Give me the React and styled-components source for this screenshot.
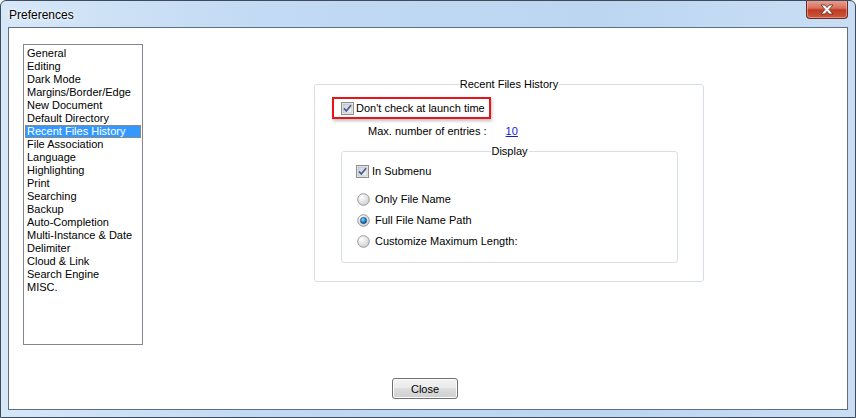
import React, { useState } from 'react';
import styled, { createGlobalStyle } from 'styled-components';

const GlobalStyle = createGlobalStyle`
  html, body {
    margin: 0;
    padding: 0;
    background: #ffffff;
  }
  body {
    font-family: "Liberation Sans", Arial, sans-serif;
    font-size: 11px;
    color: #000;
  }
`;

const Window = styled.div`
  width: 856px;
  height: 418px;
  box-sizing: border-box;
  display: flex;
  flex-direction: column;
  border: 1px solid #3e4b5c;
  border-radius: 6px 6px 0 0;
  background: linear-gradient(to right, #d6e7f8 0%, #c2daf3 30%, #bcd6f1 70%, #c9def4 100%);
  overflow: hidden;
`;

const TitleBar = styled.div`
  height: 26px;
  display: flex;
  align-items: flex-start;
  padding-left: 8px;
  flex-shrink: 0;
`;

const TitleText = styled.div`
  font-family: "Liberation Sans", Arial, sans-serif;
  font-size: 12px;
  line-height: 14px;
  margin-top: 7px;
  color: #000;
  text-shadow: 0 0 6px #ffffff, 0 0 3px #ffffff;
`;

const CloseX = styled.button`
  margin-left: auto;
  margin-right: 7px;
  margin-top: -1px;
  width: 42px;
  height: 19px;
  padding: 0;
  border: 1px solid #6a2a24;
  border-top: none;
  border-radius: 0 0 4px 4px;
  background: linear-gradient(to bottom, #e8a597 0%, #d9705d 45%, #c03a22 55%, #c85a3f 100%);
  box-shadow: inset 0 0 0 1px rgba(255, 200, 190, 0.5);
  display: flex;
  align-items: center;
  justify-content: center;
`;

const Client = styled.div`
  margin: 0 7px;
  height: 383px;
  box-sizing: border-box;
  border: 1px solid #5f6e80;
  background: #ffffff;
  display: flex;
  flex-direction: column;
`;

const Body = styled.div`
  display: flex;
  align-items: flex-start;
  padding: 16px 0 0 14px;
`;

const ListBox = styled.ul`
  list-style: none;
  margin: 0;
  padding: 2px 1px 1px;
  width: 120px;
  height: 301px;
  box-sizing: border-box;
  border: 1px solid #828790;
  flex-shrink: 0;
`;

const ListItem = styled.li`
  height: 13px;
  line-height: 13px;
  padding-left: 2px;
  white-space: nowrap;
  box-sizing: border-box;
  background: ${(p) => (p.$selected ? '#3399ff' : 'transparent')};
  color: ${(p) => (p.$selected ? '#ffffff' : '#000000')};
  outline: ${(p) => (p.$selected ? '1px dotted #e07a10' : 'none')};
  outline-offset: -1px;
  cursor: default;
`;

const GroupBox = styled.div`
  position: relative;
  box-sizing: border-box;
  width: ${(p) => p.$w}px;
  height: ${(p) => p.$h}px;
  border: 1px solid #d5dfe5;
  border-radius: 3px;
  flex-shrink: 0;
`;

const GroupTitle = styled.span`
  position: absolute;
  top: -7px;
  left: 50%;
  transform: translateX(-50%);
  padding: 0 1px;
  background: #ffffff;
  line-height: 13px;
  white-space: nowrap;
`;

const MainGroup = styled(GroupBox)`
  margin-left: 171px;
  margin-top: 40px;
  padding: 12px 0 0 17px;
`;

const Highlight = styled.div`
  display: inline-flex;
  height: 22px;
  box-sizing: border-box;
  border: 2px solid #e8141b;
  box-shadow: 1px 2px 3px rgba(0, 0, 0, 0.25);
  align-items: center;
  padding: 0 4px 0 7px;
  gap: 2px;
`;

const EntriesRow = styled.div`
  display: flex;
  align-items: center;
  margin: 4px 0 0 36px;
  height: 15px;
`;

const EntriesLink = styled.a`
  margin-left: 19px;
  color: #1a1acc;
  text-decoration: underline;
`;

const DisplayGroup = styled(GroupBox)`
  margin: 13px 0 0 9px;
  padding: 13px 0 0 14px;
  display: flex;
  flex-direction: column;
`;

const OptionRow = styled.label`
  display: flex;
  align-items: center;
  height: 13px;
  line-height: 13px;
  gap: ${(p) => (p.$radio ? 5 : 3)}px;
  margin-top: ${(p) => p.$top || 0}px;
  margin-left: ${(p) => (p.$radio ? 1 : 0)}px;
  white-space: nowrap;
  cursor: default;
`;

const Footer = styled.div`
  padding: 33px 0 0 383px;
`;

const PushButton = styled.button`
  width: 66px;
  height: 21px;
  padding: 0;
  box-sizing: border-box;
  border: 1px solid #707070;
  border-radius: 3px;
  background: linear-gradient(to bottom, #f2f2f2 0%, #ebebeb 49%, #dddddd 50%, #cfcfcf 100%);
  box-shadow: inset 0 0 0 1px #fcfcfc;
  font-family: "Liberation Sans", Arial, sans-serif;
  font-size: 11px;
  color: #000;
`;

const CheckBox = ({ checked }) => (
  <svg width="13" height="13" viewBox="0 0 13 13" style={{ flexShrink: 0 }}>
    <defs>
      <linearGradient id="cbg" x1="0" y1="0" x2="1" y2="1">
        <stop offset="0" stopColor="#cbcfd5" />
        <stop offset="1" stopColor="#f6f6f6" />
      </linearGradient>
    </defs>
    <rect x="0.5" y="0.5" width="12" height="12" fill="#f4f4f4" stroke="#8e8f8f" />
    <rect x="2" y="2" width="9" height="9" fill="url(#cbg)" stroke="#aeb3b9" strokeWidth="0.6" />
    {checked && (
      <path d="M3 6.4 L5.3 9 L10 3.2" fill="none" stroke="#4a5f97" strokeWidth="1.8" strokeLinejoin="round" />
    )}
  </svg>
);

const Radio = ({ checked }) => (
  <svg width="13" height="13" viewBox="0 0 13 13" style={{ flexShrink: 0 }}>
    <defs>
      <radialGradient id="rbg" cx="0.35" cy="0.3" r="0.8">
        <stop offset="0" stopColor="#ffffff" />
        <stop offset="1" stopColor="#c9ccd1" />
      </radialGradient>
      <radialGradient id="rdot" cx="0.4" cy="0.35" r="0.7">
        <stop offset="0" stopColor="#8fd6ff" />
        <stop offset="0.6" stopColor="#1b7dc4" />
        <stop offset="1" stopColor="#0e4b80" />
      </radialGradient>
    </defs>
    <circle cx="6.5" cy="6.5" r="5.8" fill="url(#rbg)" stroke="#8e8f8f" strokeWidth="0.9" />
    {checked && <circle cx="6.5" cy="6.5" r="3.2" fill="url(#rdot)" stroke="#1f4a78" strokeWidth="0.5" />}
  </svg>
);

const pages = [
  'General',
  'Editing',
  'Dark Mode',
  'Margins/Border/Edge',
  'New Document',
  'Default Directory',
  'Recent Files History',
  'File Association',
  'Language',
  'Highlighting',
  'Print',
  'Searching',
  'Backup',
  'Auto-Completion',
  'Multi-Instance & Date',
  'Delimiter',
  'Cloud & Link',
  'Search Engine',
  'MISC.',
];

const radios = ['Only File Name', 'Full File Name Path', 'Customize Maximum Length:'];

const App = () => {
  const [selected, setSelected] = useState('Recent Files History');
  const [mode, setMode] = useState('Full File Name Path');

  return (
    <>
      <GlobalStyle />
      <Window>
        <TitleBar>
          <TitleText>Preferences</TitleText>
          <CloseX aria-label="Close">
            <svg width="16" height="11" viewBox="0 0 16 11">
              <path
                d="M2 1 L6 1 L8 3.6 L10 1 L14 1 L10 5.5 L14 10 L10 10 L8 7.4 L6 10 L2 10 L6 5.5 Z"
                fill="#ffffff"
                stroke="#5b2a22"
                strokeWidth="0.8"
                strokeLinejoin="round"
              />
            </svg>
          </CloseX>
        </TitleBar>
        <Client>
          <Body>
            <ListBox>
              {pages.map((p) => (
                <ListItem key={p} $selected={p === selected} onClick={() => setSelected(p)}>
                  {p}
                </ListItem>
              ))}
            </ListBox>
            <MainGroup $w={390} $h={198}>
              <GroupTitle>Recent Files History</GroupTitle>
              <Highlight>
                <CheckBox checked />
                <span>Don't check at launch time</span>
              </Highlight>
              <EntriesRow>
                <span>Max. number of entries :</span>
                <EntriesLink href="#">10</EntriesLink>
              </EntriesRow>
              <DisplayGroup $w={337} $h={112}>
                <GroupTitle>Display</GroupTitle>
                <OptionRow>
                  <CheckBox checked />
                  <span>In Submenu</span>
                </OptionRow>
                {radios.map((r, i) => (
                  <OptionRow key={r} $radio $top={i === 0 ? 15 : 8} onClick={() => setMode(r)}>
                    <Radio checked={mode === r} />
                    <span>{r}</span>
                  </OptionRow>
                ))}
              </DisplayGroup>
            </MainGroup>
          </Body>
          <Footer>
            <PushButton>Close</PushButton>
          </Footer>
        </Client>
      </Window>
    </>
  );
};

export default App;
